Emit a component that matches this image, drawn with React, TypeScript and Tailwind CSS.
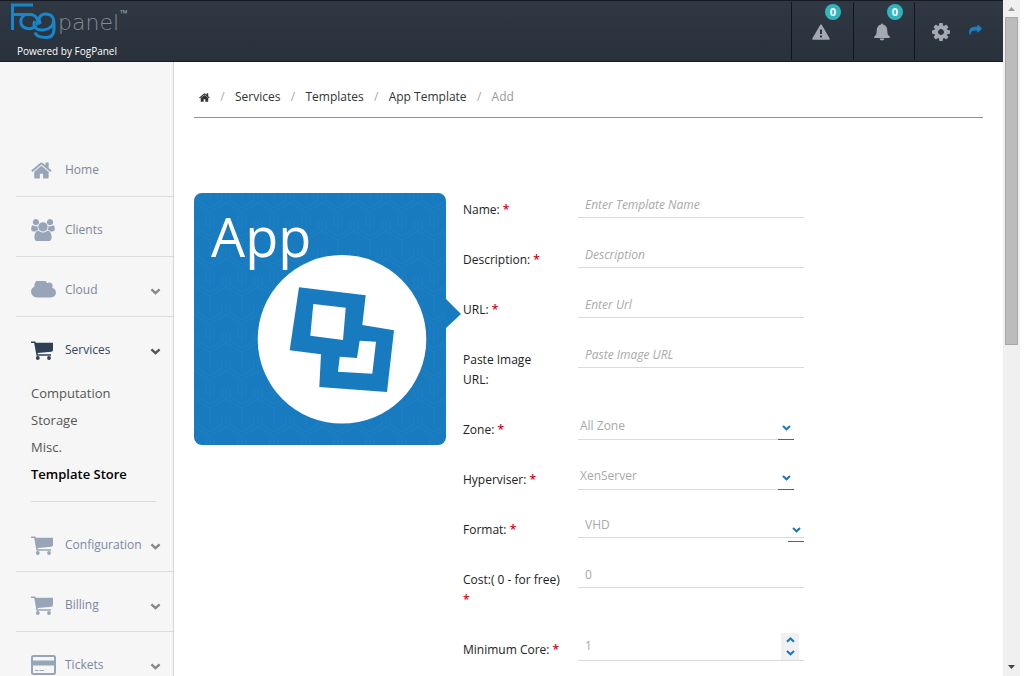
import type { ReactNode } from 'react';

const HOME =
  'M1472 992v480q0 26-19 45t-45 19h-384v-384h-256v384h-384q-26 0-45-19t-19-45v-480q0-1 .5-3t.5-3l575-474 575 474q1 2 1 6zm223-69l-62 74q-8 9-21 11h-3q-13 0-21-7l-692-577-692 577q-12 8-24 7-13-2-21-11l-62-74q-8-10-7-23.5t11-21.5l719-599q32-26 76-26t76 26l244 204v-195q0-14 9-23t23-9h192q14 0 23 9t9 23v408l219 182q10 8 11 21.5t-7 23.5z';
const USERS =
  'M593 896q-162 5-265 128h-134q-82 0-138-40.5t-56-118.5q0-353 124-353 6 0 43.5 21t97.5 42.5 119 21.5q67 0 133-23-5 37-5 66 0 139 81 256zm1071 637q0 120-73 189.5t-194 69.5h-874q-121 0-194-69.5t-73-189.5q0-53 3.5-103.5t14-109 26.5-108.5 43-97.5 62-81 85.5-53.5 111.5-20q10 0 43 21.5t73 48 107 48 135 21.5 135-21.5 107-48 73-48 43-21.5q61 0 111.5 20t85.5 53.5 62 81 43 97.5 26.5 108.5 14 109 3.5 103.5zm-1024-1277q0 106-75 181t-181 75-181-75-75-181 75-181 181-75 181 75 75 181zm704 384q0 159-112.5 271.5t-271.5 112.5-271.5-112.5-112.5-271.5 112.5-271.5 271.5-112.5 271.5 112.5 112.5 271.5zm576 225q0 78-56 118.5t-138 40.5h-134q-103-123-265-128 81-117 81-256 0-29-5-66 66 23 133 23 59 0 119-21.5t97.5-42.5 43.5-21q124 0 124 353zm-128-609q0 106-75 181t-181 75-181-75-75-181 75-181 181-75 181 75 75 181z';
const CLOUD =
  'M1984 1152q0 159-112.5 271.5t-271.5 112.5h-1088q-185 0-316.5-131.5t-131.5-316.5q0-132 71-241.5t187-163.5q-2-28-2-43 0-212 150-362t362-150q158 0 286.5 88t187.5 230q70-62 166-62 106 0 181 75t75 181q0 75-41 138 129 30 213 134.5t84 239.5z';
const COG =
  'M1152 896q0-106-75-181t-181-75-181 75-75 181 75 181 181 75 181-75 75-181zm512-109v222q0 12-8 23t-20 13l-185 28q-19 54-39 91 35 50 107 138 10 12 10 25t-9 23q-27 37-99 108t-94 71q-12 0-26-9l-138-108q-44 23-91 38-16 136-29 186-7 28-36 28h-222q-14 0-24.5-8.5t-11.5-21.5l-28-184q-49-16-90-37l-141 107q-10 9-25 9-14 0-25-11-126-114-165-168-7-10-7-23 0-12 8-23 15-21 51-66.5t54-70.5q-27-50-41-99l-183-27q-13-2-21-12.5t-8-23.5v-222q0-12 8-23t19-13l186-28q14-46 39-92-40-57-107-138-10-12-10-24 0-10 9-23 26-36 98.5-107.5t94.5-71.5q13 0 26 10l138 107q44-23 91-38 16-136 29-186 7-28 36-28h222q14 0 24.5 8.5t11.5 21.5l28 184q49 16 90 37l142-107q9-9 24-9 13 0 25 10 129 119 165 170 7 8 7 22 0 12-8 23-15 21-51 66.5t-54 70.5q26 50 41 98l183 28q13 2 21 12.5t8 23.5z';
const SHARE =
  'M1792 640q0 26-19 45l-512 512q-19 19-45 19t-45-19-19-45v-256h-224q-98 0-175.5 6t-154 21.5-133 42.5-105.5 69.5-80 101-48.5 138.5-17.5 181q0 55 5 123 0 6 2.5 23.5t2.5 26.5q0 15-8.5 25t-23.5 10q-16 0-28-17-7-9-13-22t-13.5-30-10.5-24q-127-285-127-451 0-199 53-333 162-403 875-403h224v-256q0-26 19-45t45-19 45 19l512 512q19 19 19 45z';

function Glyph({ d, box, className }: { d: string; box: string; className: string }) {
  return (
    <svg viewBox={box} className={className} fill="currentColor" aria-hidden="true">
      <path d={d} />
    </svg>
  );
}

function CartIcon() {
  return (
    <svg viewBox="0 0 22 19" className="h-[19px] w-[22px]" fill="currentColor" aria-hidden="true">
      <path d="M0 .4h4.300l.6 1.300H22v7.400q0 1.500-1.700 1.700L6.600 12l.3 1.300H20v1.500H5.500L3.200 2H0z" />
      <circle cx="6.800" cy="17" r="1.900" />
      <circle cx="18" cy="17" r="1.900" />
    </svg>
  );
}

function CardIcon() {
  return (
    <svg viewBox="0 0 25 20" className="h-5 w-[25px]" aria-hidden="true">
      <rect x="1" y="1" width="23" height="18" rx="1.500" fill="none" stroke="currentColor" strokeWidth="2" />
      <path d="M1 5.500h23v5H1z" fill="currentColor" />
      <path d="M4 15.500h3.500M8.500 15.500h4.500" stroke="currentColor" strokeWidth="1.200" />
    </svg>
  );
}

function Chevron({ className, up = false }: { className: string; up?: boolean }) {
  return (
    <svg viewBox="0 0 10 7" className={className} fill="none" stroke="currentColor" strokeWidth="2.400" aria-hidden="true">
      <path d={up ? 'M.9 5.500 5 1.700l4.100 3.800' : 'M.9 1.300 5 5.100l4.100-3.800'} />
    </svg>
  );
}

function Logo() {
  return (
    <a href="#" className="flex h-full flex-col pl-[10px] pt-[2px]">
      <svg viewBox="0 0 122 40" className="h-10 w-[122px]" role="img" aria-label="FogPanel">
        <g fill="none" stroke="#1787cb" strokeWidth="3">
          <path d="M2.500 27V2H23" />
          <path d="M2.500 11.500H20c3.500 0 5.500 1.500 7 4 1.200 2.300 1.200 4.500-.5 6.500" />
          <path d="M15.500 11.500c-6 3-6.500 11 0 13.500 4 1.300 8 .5 10.500-2.500" />
          <path d="M25 18c-3 4.500 1 9 6 9h3c5-.5 9.500-4 9.500-9" />
          <path d="M30.500 21c-3.500-5-.5-10 5-10 5.500 0 8.500 3.500 8.500 8.500V26c0 6-3 8.500-8 8.500-6 0-9.500-1-11-5" />
        </g>
        <text x="48" y="27" fill="#848c97" fontSize="22" fontFamily="DejaVu Sans" fontWeight="200">
          panel
        </text>
        <text x="110" y="14" fill="#9aa2ab" fontSize="10" fontFamily="Open Sans">
          ™
        </text>
      </svg>
      <span className="pl-[7px] text-[10px] font-medium leading-[17px] text-white">Powered by FogPanel</span>
    </a>
  );
}

function Header() {
  const cell = 'relative flex h-[58px] items-center justify-center border-l border-[#11161d] text-[#a3a8b2]';
  const badge =
    'absolute left-[33px] top-[2px] flex h-4 w-4 items-center justify-center rounded-full bg-[#30b5be] text-[11px] font-bold leading-4 text-white';
  return (
    <header className="flex h-[62px] shrink-0 items-start justify-between border-y border-[#151a22] bg-linear-to-b from-[#2f3843] to-[#29313b]">
      <Logo />
      <nav className="flex items-start pt-px" aria-label="Account">
        <button className={`${cell} w-[62px] pr-1`} aria-label="Alerts">
          <svg viewBox="0 0 18 16" className="mt-[2px] h-4 w-[18px]" aria-hidden="true">
            <path d="M9 1.200 17 15H1z" fill="currentColor" stroke="currentColor" strokeWidth="1.600" strokeLinejoin="round" />
            <path d="M9 5.500v4.500M9 11.500v2" stroke="#2c343f" strokeWidth="2" />
          </svg>
          <span className={badge}>0</span>
        </button>
        <button className={`${cell} w-[61px] pr-1`} aria-label="Notifications">
          <svg viewBox="0 0 16 18" className="mt-[2px] h-[18px] w-4" fill="currentColor" aria-hidden="true">
            <path d="M7 1.500a1 1 0 0 1 2 0C12 2.300 13.300 4.600 13.300 7.500c0 3.200.5 4.600 2.500 6.300V15H.2v-1.200C2.200 12.100 2.700 10.700 2.700 7.500c0-2.900 1.300-5.200 4.300-6zM5.600 15.500h4.800a2.400 2 0 0 1-4.800 0z" />
          </svg>
          <span className={badge}>0</span>
        </button>
        <div className={`${cell} w-[89px] gap-[19px] pr-1`}>
          <button aria-label="Settings">
            <Glyph d={COG} box="128 128 1536 1536" className="mt-[2px] h-[18px] w-[18px]" />
          </button>
          <button aria-label="Log out" className="pb-[3px] text-[#1781c4]">
            <Glyph d={SHARE} box="0 128 1792 1408" className="h-[10px] w-[13px]" />
          </button>
        </div>
      </nav>
    </header>
  );
}

function NavRow({ label, icon, chevron = true, active = false }: { label: string; icon: ReactNode; chevron?: boolean; active?: boolean }) {
  return (
    <a
      href="#"
      className={`ml-4 flex h-[60px] items-center border-b pl-[15px] pr-3 pt-[7px] text-[12px] leading-5 ${
        active ? 'border-transparent font-medium text-[#34465c]' : 'border-[#dcdcdc] text-[#7b889d]'
      }`}
    >
      <span className={`flex w-[34px] ${active ? 'text-[#2f4055]' : 'text-[#98a5b9]'}`}>{icon}</span>
      <span className="flex-1">{label}</span>
      {chevron && <Chevron className={`mt-[3px] h-[7px] w-[11px] ${active ? 'text-[#555]' : 'text-[#888]'}`} />}
    </a>
  );
}

function Sidebar() {
  return (
    <aside className="w-[174px] shrink-0 overflow-hidden border-r border-[#d5d6d8] bg-[#f6f6f6] pt-[75px]">
      <nav aria-label="Main">
        <NavRow label="Home" chevron={false} icon={<Glyph d={HOME} box="60 240 1680 1310" className="h-[17px] w-[21px]" />} />
        <NavRow label="Clients" chevron={false} icon={<Glyph d={USERS} box="0 0 1920 1792" className="h-[22px] w-6" />} />
        <NavRow label="Cloud" icon={<Glyph d={CLOUD} box="64 384 1920 1152" className="h-[18px] w-[25px]" />} />
        <NavRow label="Services" active icon={<CartIcon />} />
        <ul className="ml-[31px] mr-[17px] mb-[10px] border-b border-[#dcdcdc] pt-[3px] pb-[13px] text-[13px] leading-[27px] text-[#555]">
          <li><a href="#">Computation</a></li>
          <li><a href="#">Storage</a></li>
          <li><a href="#">Misc.</a></li>
          <li><a href="#" className="font-semibold text-black">Template Store</a></li>
        </ul>
        <NavRow label="Configuration" icon={<CartIcon />} />
        <NavRow label="Billing" icon={<CartIcon />} />
        <NavRow label="Tickets" icon={<CardIcon />} />
      </nav>
    </aside>
  );
}

function Slash() {
  return <span className="w-[5px] text-center text-[#aaa]">/</span>;
}

function Breadcrumb() {
  return (
    <nav aria-label="Breadcrumb" className="flex items-center gap-[10px] border-b border-[#8e9194] pb-[10px] pl-[5px] text-[12px] leading-5 text-[#333]">
      <a href="#" aria-label="Home">
        <Glyph d={HOME} box="60 240 1680 1310" className="h-[9px] w-[11px]" />
      </a>
      <Slash />
      <a href="#">Services</a>
      <Slash />
      <a href="#">Templates</a>
      <Slash />
      <a href="#">App Template</a>
      <Slash />
      <span className="text-[#999]">Add</span>
    </nav>
  );
}

function AppCard() {
  return (
    <svg viewBox="0 0 268 252" className="mt-[5px] h-[252px] w-[268px] shrink-0" role="img" aria-label="App">
      <defs>
        <pattern id="weave" width="32" height="56" patternUnits="userSpaceOnUse">
          <path
            d="M0 0v10l16 9 16-9V0M16 19v19M0 28v10l16 9 16-9V28M16 47v9M4 0v8l12 7 12-7V0M4 28v8l12 7 12-7v-8M16 0v7M20 21v13M12 21v13"
            fill="none"
            stroke="#2c88c8"
            strokeWidth="1"
            opacity=".35"
          />
        </pattern>
      </defs>
      <rect width="252" height="252" rx="8" fill="#187bc0" />
      <rect width="252" height="252" rx="8" fill="url(#weave)" />
      <path d="M251 105l16 16-16 15z" fill="#187bc0" />
      <circle cx="148" cy="146.300" r="84.300" fill="#fff" />
      <text x="17" y="64" fill="#fff" fontSize="54" fontFamily="Open Sans" fontWeight="400">
        App
      </text>
      <path
        fill="#187bc0"
        fillRule="evenodd"
        d="M105 94.300 171.700 102.300 168.300 132 200 137.300 193 199 125.300 194 127 161.300 95.700 157.300zM119.300 111 151.700 114.700 149 147 116.300 142.700zM165.700 147.700 182 148.700 178.300 180.700 144 178.700 145.700 163.700 163 165z"
      />
    </svg>
  );
}

function Field({ id, label, required = true, children }: { id: string; label: ReactNode; required?: boolean; children: ReactNode }) {
  return (
    <div className="mb-[18px] flex items-start">
      <label htmlFor={id} className="w-[115px] shrink-0 pr-4 pt-3 font-medium leading-5 text-[#222]">
        {label} {required && <span className="font-semibold text-[#d0000f]">*</span>}
      </label>
      {children}
    </div>
  );
}

function TextInput({ id, placeholder, value }: { id: string; placeholder?: string; value?: string }) {
  return (
    <input
      id={id}
      placeholder={placeholder}
      defaultValue={value}
      className="h-[30px] w-[226px] border-b border-[#dadada] bg-transparent px-[7px] pt-[3px] text-[#a9a9a9] outline-none placeholder:italic placeholder:text-[#a9a9a9]"
    />
  );
}

function SelectInput({ id, value }: { id: string; value: string }) {
  return (
    <div className="relative h-8 w-[216px] text-[#1b78b8]">
      <select id={id} className="block h-8 w-full appearance-none border-b border-[#dadada] bg-transparent pl-[2px] pt-[5px] text-[#a9a9a9] outline-none">
        <option>{value}</option>
      </select>
      <span className="pointer-events-none absolute bottom-0 right-0 flex h-6 w-4 items-center justify-center border-b border-[#2b6fa6]">
        <Chevron className="h-[6px] w-[9px]" />
      </span>
    </div>
  );
}

function TemplateForm() {
  return (
    <form className="ml-px min-w-0 flex-1 text-[12px]">
      <Field id="name" label="Name:"><TextInput id="name" placeholder="Enter Template Name" /></Field>
      <Field id="description" label="Description:"><TextInput id="description" placeholder="Description" /></Field>
      <Field id="url" label="URL:"><TextInput id="url" placeholder="Enter Url" /></Field>
      <Field id="image" label={<>Paste Image<br />URL:</>} required={false}><TextInput id="image" placeholder="Paste Image URL" /></Field>
      <Field id="zone" label="Zone:"><SelectInput id="zone" value="All Zone" /></Field>
      <Field id="hypervisor" label="Hyperviser:"><SelectInput id="hypervisor" value="XenServer" /></Field>
      <Field id="format" label="Format:">
        <div className="relative w-[226px] text-[#1b78b8]">
          <select id="format" className="block h-[30px] w-full appearance-none border-b border-[#dadada] bg-transparent px-[7px] pt-[5px] text-[#a9a9a9] outline-none">
            <option>VHD</option>
          </select>
          <span className="pointer-events-none absolute right-0 top-[10px] flex h-6 w-4 items-center justify-center border-b border-[#2b6fa6]">
            <Chevron className="h-[6px] w-[9px]" />
          </span>
        </div>
      </Field>
      <Field id="cost" label="Cost:( 0 - for free)"><TextInput id="cost" value="0" /></Field>
      <Field id="core" label="Minimum Core:">
        <div className="flex h-[33px] w-[226px] border-b border-[#dadada]">
          <input id="core" defaultValue="1" className="min-w-0 flex-1 bg-transparent px-[7px] pt-[3px] text-[#a9a9a9] outline-none" />
          <div className="mr-[5px] mt-[5px] flex w-[18px] flex-col bg-[#f0f1f2] text-[#1b78b8]">
            <button type="button" aria-label="Increase" className="flex flex-1 items-center justify-center">
              <Chevron up className="h-[6px] w-[9px]" />
            </button>
            <button type="button" aria-label="Decrease" className="flex flex-1 items-center justify-center">
              <Chevron className="h-[6px] w-[9px]" />
            </button>
          </div>
        </div>
      </Field>
    </form>
  );
}

function ScrollRail() {
  return (
    <div className="mr-1 flex w-[17px] shrink-0 flex-col items-center bg-[#f0f0f0]" aria-hidden="true">
      <svg viewBox="0 0 17 17" className="h-[17px] w-[17px] shrink-0"><path d="M5 11l3.500-4L12 11z" fill="#999" /></svg>
      <div className="h-[328px] w-[13px] border border-[#a8a8a8] bg-[#bcbcbc]" />
      <svg viewBox="0 0 17 17" className="mt-auto h-[17px] w-[17px] shrink-0"><path d="M5 6l3.500 4L12 6z" fill="#444" /></svg>
    </div>
  );
}

export default function App() {
  return (
    <div className="flex h-screen overflow-hidden bg-white font-['Open_Sans',sans-serif]">
      <div className="flex min-w-0 flex-1 flex-col">
        <Header />
        <div className="flex min-h-0 flex-1">
          <Sidebar />
          <main className="min-w-0 flex-1 overflow-y-auto px-5 pt-[25px] [scrollbar-width:none]">
            <Breadcrumb />
            <div className="flex items-start pt-[70px]">
              <AppCard />
              <TemplateForm />
            </div>
          </main>
        </div>
      </div>
      <ScrollRail />
    </div>
  );
}
